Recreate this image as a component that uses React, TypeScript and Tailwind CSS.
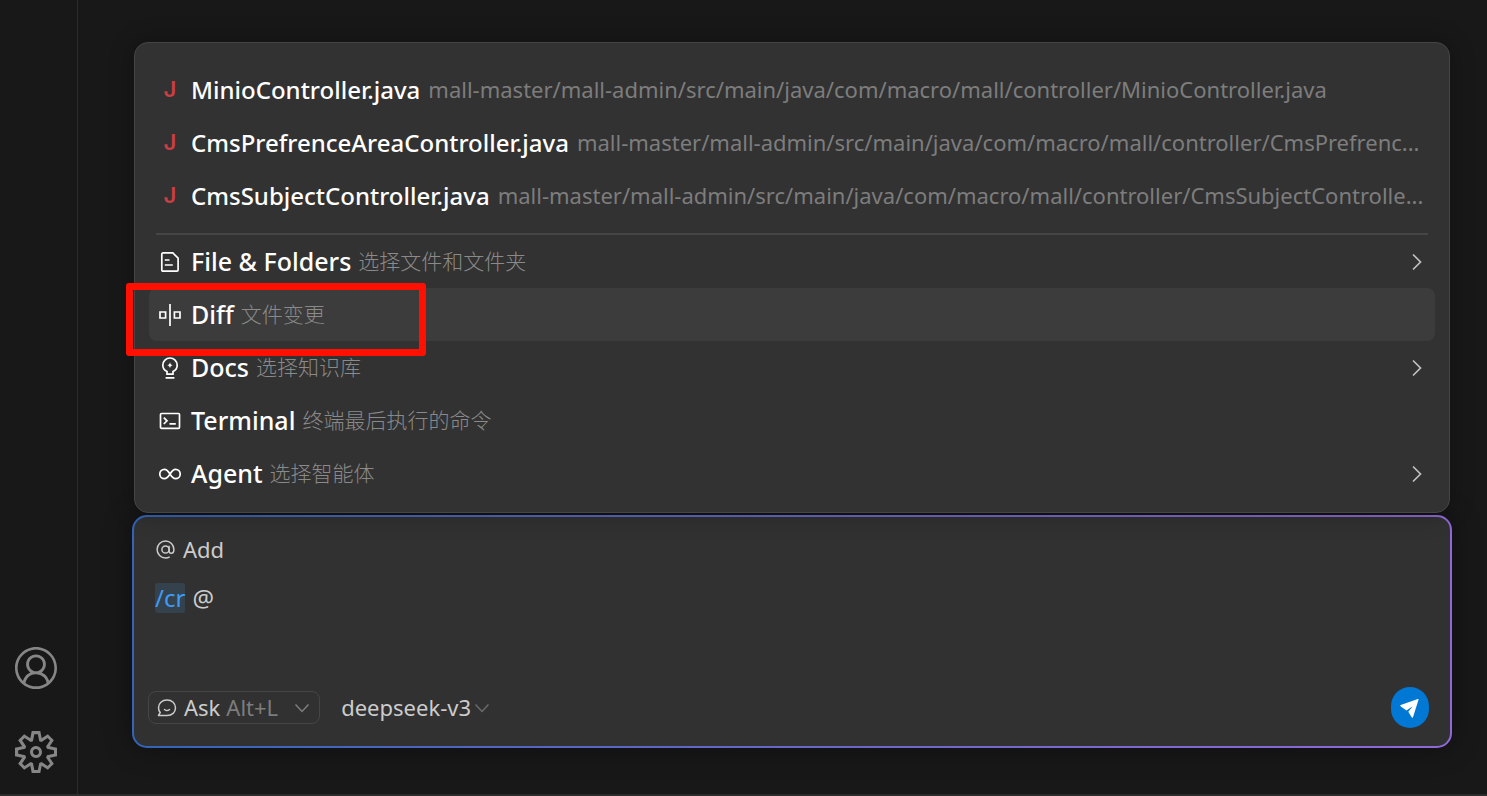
import { useState } from 'react';
import type { ReactNode } from 'react';
import { VscAccount, VscSettingsGear } from 'react-icons/vsc';

const files = [
  {
    name: 'MinioController.java',
    path: 'mall-master/mall-admin/src/main/java/com/macro/mall/controller/MinioController.java',
  },
  {
    name: 'CmsPrefrenceAreaController.java',
    path: 'mall-master/mall-admin/src/main/java/com/macro/mall/controller/CmsPrefrenc...',
  },
  {
    name: 'CmsSubjectController.java',
    path: 'mall-master/mall-admin/src/main/java/com/macro/mall/controller/CmsSubjectControlle...',
  },
];

const iconProps = {
  width: 22,
  height: 22,
  viewBox: '0 0 22 22',
  fill: 'none',
  stroke: 'currentColor',
  strokeWidth: 1.7,
  'aria-hidden': true,
} as const;

const FileIcon = () => (
  <svg {...iconProps}>
    <path d="M4 1.9h9.8l5.3 5.3V19a1.2 1.2 0 0 1-1.2 1.2H4A1.2 1.2 0 0 1 2.8 19V3.1A1.2 1.2 0 0 1 4 1.9Z" />
    <path d="M5.8 9h4.7M5.8 14h8" />
  </svg>
);

const DiffIcon = () => (
  <svg {...iconProps}>
    <path d="M11 0v22M1 8h5.6v6H1zM15.4 8H21v6h-5.6z" />
  </svg>
);

const BulbIcon = () => (
  <svg {...iconProps}>
    <path d="M8 17.2v-2.6C5.5 13.3 3.8 11 3.8 8.2a7.2 7.2 0 0 1 14.4 0c0 2.8-1.7 5.1-4.2 6.4v2.6ZM6.6 20.8h8.8" />
    <path d="M11 5.2c.4 1.9 1.1 2.6 3 3-1.9.4-2.6 1.1-3 3-.4-1.9-1.1-2.6-3-3 1.9-.4 2.6-1.1 3-3Z" fill="currentColor" stroke="none" />
  </svg>
);

const TerminalIcon = () => (
  <svg {...iconProps}>
    <rect x="1.5" y="3.5" width="19" height="14.8" rx="1" />
    <path d="m4.8 7.6 3.2 3.2-3.2 3.2M10.5 13.8h6.3" />
  </svg>
);

const AgentIcon = () => (
  <svg {...iconProps}>
    <path d="M11 11C9 7.8 7.6 6.3 5.5 6.3a4.7 4.7 0 0 0 0 9.4C7.6 15.7 9 14.2 11 11s3.4-4.7 5.5-4.7a4.7 4.7 0 0 1 0 9.4C14.4 15.7 13 14.2 11 11Z" />
  </svg>
);

const ChevronDown = () => (
  <svg width="16" height="16" viewBox="0 0 16 16" fill="none" stroke="currentColor" strokeWidth="1.5" aria-hidden="true">
    <path d="m1.5 4.5 6.5 7 6.5-7" />
  </svg>
);

type Item = {
  label: string;
  desc: string;
  icon: ReactNode;
  more?: boolean;
};

const items: Item[] = [
  { label: 'File & Folders', desc: '选择文件和文件夹', icon: <FileIcon />, more: true },
  { label: 'Diff', desc: '文件变更', icon: <DiffIcon /> },
  { label: 'Docs', desc: '选择知识库', icon: <BulbIcon />, more: true },
  { label: 'Terminal', desc: '终端最后执行的命令', icon: <TerminalIcon /> },
  { label: 'Agent', desc: '选择智能体', icon: <AgentIcon />, more: true },
];

const Sidebar = () => (
  <nav className="flex w-[78px] shrink-0 flex-col items-start justify-end gap-[42px] border-r border-[#2b2b2b] pb-[21px] pl-[15px] text-[#868686]">
    <button type="button" aria-label="Accounts">
      <VscAccount size={42} />
    </button>
    <button type="button" aria-label="Manage">
      <VscSettingsGear size={42} />
    </button>
  </nav>
);

const ContextMenu = () => {
  const [active, setActive] = useState('Diff');

  return (
    <div className="relative z-10 mx-[2px] rounded-[14px] border border-[#454545] bg-[#323232] px-[14px] pt-5 pb-3 shadow-[0_0_24px_rgba(0,0,0,0.3)]">
      {files.map((file) => (
        <button key={file.name} type="button" className="flex h-[53px] w-full items-center rounded-lg px-[10px] text-left">
          <span className="w-[22px] shrink-0 text-center font-['Inter',sans-serif] text-[22px] font-semibold text-[#cc3e44]">J</span>
          <span className="ml-[10px] shrink-0 text-[24px] font-medium text-white">{file.name}</span>
          <span className="ml-2 truncate text-[22px] text-[#7d7d7d]">{file.path}</span>
        </button>
      ))}

      <hr className="mx-[7px] mt-[11px] border-t-2 border-[#454545]" />

      {items.map((item) => (
        <button
          key={item.label}
          type="button"
          onClick={() => setActive(item.label)}
          className={`relative flex h-[53px] w-full items-center rounded-lg px-[10px] text-left text-white ${
            item.label === active ? 'bg-[#3c3c3c]' : ''
          }`}
        >
          {item.icon}
          <span className="ml-[10px] text-[25px] font-medium">{item.label}</span>
          <span className="ml-[7px] text-[21px] font-light text-[#8a8a8a]">{item.desc}</span>
          {item.more && (
            <svg className="ml-auto text-[#c0c0c0]" width="16" height="18" viewBox="0 0 16 18" fill="none" stroke="currentColor" strokeWidth="1.7" aria-hidden="true">
              <path d="m4 1.5 7.5 7.5L4 16.5" />
            </svg>
          )}
          {item.label === 'Diff' && (
            <span className="pointer-events-none absolute -top-[5px] -left-[23px] z-10 h-[73px] w-[300px] rounded-[3px] border-[7px] border-[#ff1000]" />
          )}
        </button>
      ))}
    </div>
  );
};

const Composer = () => {
  const [text, setText] = useState('@');

  return (
    <form className="mt-[2px] rounded-[15px] bg-linear-to-r from-[#3264b8] to-[#9068d8] p-[2px] shadow-[0_0_28px_rgba(0,0,0,0.4)]">
      <div className="rounded-[13px] bg-[#313131] px-[14px] pt-4 pb-[18px] text-[22px] text-[#cccccc]">
        <button type="button" className="flex h-8 items-center gap-2 px-2">
          <svg width="19" height="19" viewBox="0 0 19 19" fill="none" stroke="currentColor" strokeWidth="1.5" aria-hidden="true">
            <circle cx="9.5" cy="9.5" r="3.6" />
            <path d="M13.1 5.8V11c0 1.5.9 2.3 2.1 2.3 1.6 0 2.7-1.5 2.7-3.8A8.4 8.4 0 1 0 9.5 17.9c1.5 0 3-.4 4.2-1.1" />
          </svg>
          Add
        </button>

        <div className="mt-[18px] flex items-start gap-[7px] px-[7px] text-[24px]">
          <span className="h-[30px] rounded-[3px] bg-[#34424e] leading-[30px] text-[#409bf5]">/cr</span>
          <textarea
            aria-label="Message"
            value={text}
            onChange={(e) => setText(e.target.value)}
            className="h-[104px] flex-1 resize-none bg-transparent leading-[30px] outline-none"
          />
        </div>

        <div className="flex items-center">
          <button type="button" className="flex h-[33px] items-center rounded-lg border border-[#454545] px-2">
            <svg width="20" height="20" viewBox="0 0 20 20" fill="none" stroke="currentColor" strokeWidth="1.5" strokeLinecap="round" aria-hidden="true">
              <path d="M1.5 17.5H10c5 0 8.5-3.2 8.5-7.7S15 2 10 2 1.5 5.3 1.5 9.8c0 2 .6 3.5 1.7 4.8Z" strokeLinejoin="round" />
              <path d="M7.5 11.5c1.5 1.3 3.5 1.3 5 0" />
            </svg>
            <span className="ml-[7px]">Ask</span>
            <span className="ml-[6px] text-[#7d7d7d]">Alt+L</span>
            <span className="mr-[1px] ml-4 text-[#7d7d7d]">
              <ChevronDown />
            </span>
          </button>

          <div className="ml-[21px] flex items-center gap-[3px]">
            <select aria-label="Model" className="appearance-none bg-transparent outline-none">
              <option>deepseek-v3</option>
            </select>
            <span className="text-[#6b6b6b]">
              <ChevronDown />
            </span>
          </div>

          <button type="submit" aria-label="Send" className="mr-[7px] ml-auto flex h-[41px] w-[38px] items-center justify-center rounded-full bg-[#0078d4] text-white">
            <svg width="22" height="22" viewBox="0 0 22 22" fill="currentColor" aria-hidden="true">
              <path d="M19.6 2.6 14 20.3c-.2.6-.9.6-1.2.1l-3.5-5.6 4.500-5.600-6.300 4.200-6-4.200c-.5-.4-.4-1 .2-1.200L18.800 2c.6-.2 1 .1.8.6Z" />
            </svg>
          </button>
        </div>
      </div>
    </form>
  );
};

export default function App() {
  return (
    <div className="flex min-h-screen border-b-2 border-[#2b2b2b] bg-[#181818] font-['Noto_Sans','Noto_Sans_CJK_SC',sans-serif]">
      <Sidebar />
      <main className="min-w-0 flex-1 pt-[42px] pr-[35px] pb-[46px] pl-[54px]">
        <ContextMenu />
        <Composer />
      </main>
    </div>
  );
}
